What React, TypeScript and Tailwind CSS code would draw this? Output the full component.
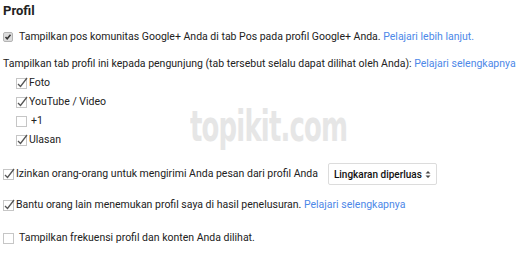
import type { ReactNode } from 'react'

const font = { fontFamily: 'Roboto, "Liberation Sans", sans-serif' }

function Box({ checked }: { checked?: boolean }) {
  return (
    <svg width="12" height="12" viewBox="0 0 12 12" className="shrink-0">
      <rect x="0.5" y="1.5" width="10" height="10" fill="#fff" stroke="#c6c6c6" />
      {checked && <path d="M2 7 L4.5 9.5 L11 1" fill="none" stroke="#555" strokeWidth="1.3" />}
    </svg>
  )
}

function SmallBox() {
  return (
    <svg width="10" height="10" viewBox="0 0 10 10" className="shrink-0">
      <rect x="0.5" y="0.5" width="9" height="9" rx="1.5" fill="#dcdcdc" stroke="#b4b4b4" />
      <path d="M2.5 5 L4.2 6.8 L7.5 2.8" fill="none" stroke="#333" strokeWidth="1.5" />
    </svg>
  )
}

function Link({ children }: { children: ReactNode }) {
  return <span className="text-[#4d88e8]">{children}</span>
}

export default function App() {
  const tabs = [
    { name: 'Foto', checked: true },
    { name: 'YouTube / Video', checked: true },
    { name: '+1', checked: false },
    { name: 'Ulasan', checked: true },
  ]

  return (
    <div className="relative w-[520px] h-[258px] bg-white text-[10.5px] text-[#222] overflow-hidden" style={font}>
      <div className="px-[3px] pt-[3px]">
        <div className="text-[13px] font-bold text-[#222] leading-[16px]">Profil</div>

        <div className="mt-[11px] flex items-center gap-[6px] h-[14px]">
          <SmallBox />
          <span>
            Tampilkan pos komunitas Google+ Anda di tab Pos pada profil Google+ Anda. <Link>Pelajari lebih lanjut.</Link>
          </span>
        </div>

        <div className="mt-[13px] h-[14px] leading-[14px] whitespace-nowrap">
          Tampilkan tab profil ini kepada pengunjung (tab tersebut selalu dapat dilihat oleh Anda): <Link>Pelajari selengkapnya</Link>
        </div>

        <div className="mt-[5px] pl-[13px] flex flex-col gap-[5px]">
          {tabs.map((t) => (
            <div key={t.name} className="flex items-center gap-[1px] h-[14px]">
              <Box checked={t.checked} />
              <span className={t.name === '+1' ? 'ml-[2px]' : ''}>{t.name}</span>
            </div>
          ))}
        </div>

        <div className="mt-[16px] flex items-center h-[22px]">
          <Box checked />
          <span className="ml-[1px]">Izinkan orang-orang untuk mengirimi Anda pesan dari profil Anda</span>
          <div className="ml-[10px] h-[22px] px-[5px] flex items-center gap-[3px] border border-[#dcdcdc] rounded-[2px] text-[10px] font-medium text-[#111]">
            Lingkaran diperluas
            <svg width="6" height="9" viewBox="0 0 6 9">
              <path d="M0.5 3.5 L3 1 L5.5 3.5 Z M0.5 5.5 L3 8 L5.5 5.5 Z" fill="#444" />
            </svg>
          </div>
        </div>

        <div className="mt-[13px] flex items-center h-[14px]">
          <Box checked />
          <span className="ml-[1px]">
            Bantu orang lain menemukan profil saya di hasil penelusuran. <Link>Pelajari selengkapnya</Link>
          </span>
        </div>

        <div className="mt-[19px] flex items-center h-[14px]">
          <Box />
          <span className="ml-[4px]">Tampilkan frekuensi profil dan konten Anda dilihat.</span>
        </div>

        <div className="mt-[13px] mx-[-1px] h-[2px] bg-[#ececec]" />
      </div>

      <div
        className="absolute left-[190px] top-[100px] text-[36px] font-bold text-[#e6e6e6] tracking-[-1px] select-none origin-left scale-x-[0.8] scale-y-[1.2]"
        style={{ fontFamily: '"DejaVu Sans Condensed", "Liberation Sans", sans-serif' }}
      >
        topikit.com
      </div>
    </div>
  )
}
